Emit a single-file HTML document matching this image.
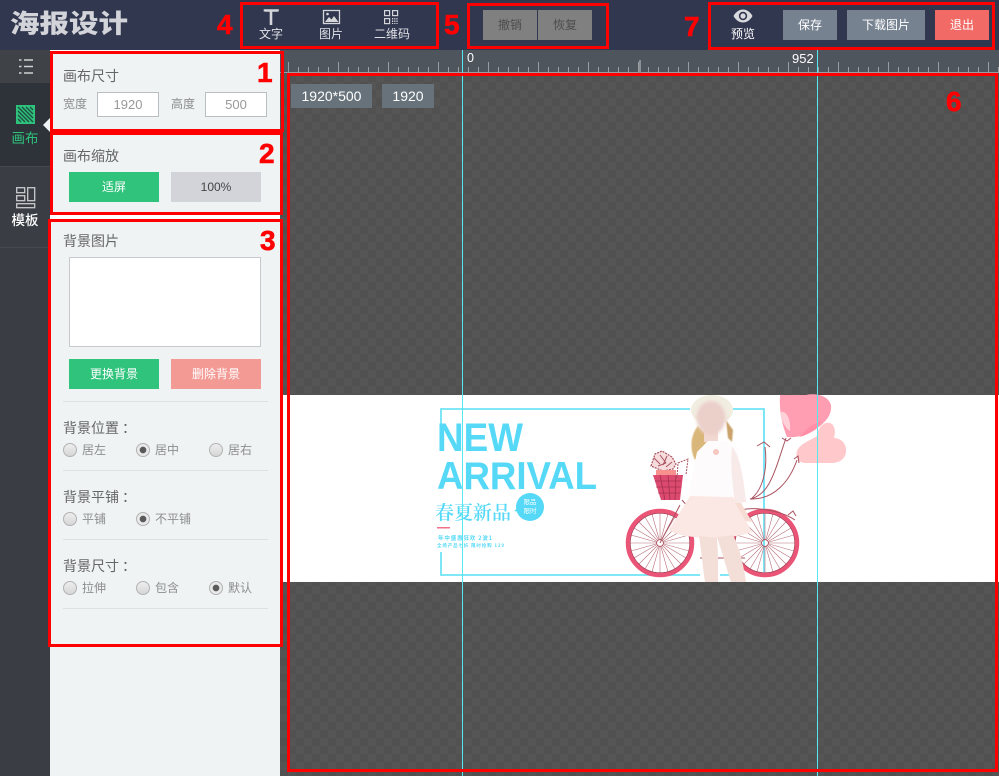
<!DOCTYPE html>
<html lang="zh"><head><meta charset="utf-8"><title>海报设计</title>
<style>
*{box-sizing:border-box}
html,body{margin:0;padding:0;width:999px;height:776px;overflow:hidden;background:#555}
body{position:relative;font-family:"Liberation Sans","Noto Sans CJK SC",sans-serif;font-size:12px;color:#666}
.a{position:absolute}
.t{position:absolute;white-space:nowrap;text-align:center}
.l{position:absolute;white-space:nowrap}
.r{position:absolute;border:3px solid #f00}
.n{position:absolute;color:#f00;font:bold 28px/30px "Liberation Sans",sans-serif;-webkit-text-stroke:.6px #f00}
.b{position:absolute;text-align:center;height:30px;line-height:30px;font-size:12px;color:#fff}
.h{position:absolute;left:63px;width:205px;height:1px;background:#dde1e3}
.ttl{position:absolute;left:63px;font-size:14px;line-height:18px;color:#666;white-space:nowrap}
.ttl span{margin-left:3px}
.rd{position:absolute;width:14px;height:14px;border-radius:50%;border:1px solid #b2b2b2;background:linear-gradient(#eee,#d6d6d6)}
.rd.on{background:radial-gradient(circle,#5a5a5a 0 3px,#e9e9e9 3.6px)}
.rl{position:absolute;font-size:12px;line-height:16px;color:#8d8d8d;white-space:nowrap}
.inp{position:absolute;top:92px;height:25px;background:#fff;border:1px solid #b9bec2;color:#999;text-align:center;line-height:24px;font-size:13px}
</style></head><body>

<div class="a" style="left:0;top:0;width:999px;height:50px;background:#323750"></div>
<div class="l" style="left:10px;top:6px;font-size:29.500px;line-height:38px;font-weight:900;color:#d2d4d9;transform:scaleY(.86);transform-origin:0 50%">海报设计</div>

<!-- toolbar -->
<svg class="a" style="left:255px;top:5px" width="160" height="24" viewBox="0 0 160 24" fill="none">
<path d="M10 6.500V5.500H22.500V6.500M16 5.500V20" stroke="#d4d6da" stroke-width="2.600"/>
<rect x="68.500" y="5.500" width="16" height="13" stroke="#d4d6da" stroke-width="1.300"/>
<path d="M70 17l4-5 2.500 2.500 2.500-3.500 4.500 6z" fill="#d4d6da"/><circle cx="72.500" cy="9" r="1.300" fill="#d4d6da"/>
<g stroke="#d4d6da" stroke-width="1.200"><rect x="129.600" y="5.600" width="5" height="5"/><rect x="137.600" y="5.600" width="5" height="5"/><rect x="129.600" y="13.600" width="5" height="5"/><path d="M137.600 13v6M139.800 13v6M142 13v6" stroke-dasharray="1.500 1"/></g>
</svg>
<div class="t" style="left:251px;width:40px;top:26px;line-height:17px;color:#dfe1e5">文字</div>
<div class="t" style="left:311px;width:40px;top:26px;line-height:17px;color:#dfe1e5">图片</div>
<div class="t" style="left:367px;width:50px;top:26px;line-height:17px;color:#dfe1e5">二维码</div>

<div class="b" style="left:483px;top:10px;width:54px;background:#808080;color:#4d4d4d">撤销</div>
<div class="b" style="left:538px;top:10px;width:54px;background:#808080;color:#4d4d4d">恢复</div>

<svg class="a" style="left:733px;top:9px" width="20" height="14" viewBox="0 0 20 14"><path d="M0.500 7C3 2.500 6.500 0.500 10 0.500S17 2.500 19.500 7C17 11.500 13.500 13.500 10 13.500S3 11.500 0.500 7z" fill="#d8dade"/><circle cx="10" cy="7" r="4.200" fill="#323750"/><circle cx="10" cy="7" r="2.600" fill="#d8dade"/></svg>
<div class="t" style="left:723px;width:40px;top:26px;line-height:17px;color:#fff">预览</div>
<div class="b" style="left:783px;top:10px;width:54px;background:#768290">保存</div>
<div class="b" style="left:847px;top:10px;width:78px;background:#768290">下载图片</div>
<div class="b" style="left:935px;top:10px;width:54px;background:#f26a66">退出</div>

<!-- left rail -->
<div class="a" style="left:0;top:50px;width:50px;height:726px;background:#3a3d44"></div>
<div class="a" style="left:0;top:50px;width:50px;height:33px;background:#3f4246"></div>
<div class="a" style="left:0;top:83px;width:50px;height:83px;background:#2d3339"></div>
<div class="a" style="left:0;top:166px;width:50px;height:1px;background:#45484e"></div>
<div class="a" style="left:0;top:247px;width:50px;height:1px;background:#45484e"></div>
<svg class="a" style="left:0;top:50px" width="50" height="200" viewBox="0 0 50 200" fill="none">
<g stroke="#d0d2d4" stroke-width="1.600"><path d="M19 10h2.500M24 10h9M19 16.500h2.500M24 16.500h9M19 23h2.500M24 23h9"/></g>
<rect x="16" y="55" width="19" height="19" fill="#2ec27c"/>
<path d="M18 57l15 15M18 61l11 11M18 65l7 7M18 69l3 3M22 57l11 11M26 57l7 7M30 57l3 3" stroke="#1f4a3f" stroke-width="1.300"/>
<g stroke="#c9cbce" stroke-width="1.300"><rect x="16.700" y="137.700" width="8" height="5"/><rect x="16.700" y="145.700" width="8" height="5"/><rect x="27.700" y="137.700" width="7" height="13"/><rect x="16.700" y="153.700" width="18" height="4"/></g>
</svg>
<div class="t" style="left:5px;width:40px;top:130px;font-size:13.500px;line-height:18px;color:#2ec27c">画布</div>
<div class="t" style="left:5px;width:40px;top:212px;font-size:13.500px;line-height:18px;color:#fff;font-weight:500">模板</div>

<!-- panel -->
<div class="a" style="left:50px;top:50px;width:230px;height:726px;background:#eff3f4"></div>
<div class="a" style="left:50px;top:50px;width:232px;height:2px;background:#fff"></div>
<div class="a" style="left:50px;top:131px;width:232px;height:3px;background:#fff"></div>
<div class="a" style="left:50px;top:214px;width:232px;height:6px;background:#fff"></div>
<div class="a" style="left:43px;top:118px;width:0;height:0;border:solid transparent;border-width:7px 7px 7px 0;border-right-color:#eff3f4"></div>

<div class="ttl" style="top:67px">画布尺寸</div>
<div class="rl" style="left:63px;top:96px;color:#8d8d8d">宽度</div>
<div class="inp" style="left:97px;width:62px">1920</div>
<div class="rl" style="left:171px;top:96px">高度</div>
<div class="inp" style="left:205px;width:62px">500</div>

<div class="ttl" style="top:147px">画布缩放</div>
<div class="b" style="left:69px;top:172px;width:90px;background:#2fc37c">适屏</div>
<div class="b" style="left:171px;top:172px;width:90px;background:#d3d4da;color:#444">100%</div>

<div class="ttl" style="top:232px">背景图片</div>
<div class="a" style="left:69px;top:257px;width:192px;height:90px;background:#fff;border:1px solid #c6cace"></div>
<div class="b" style="left:69px;top:359px;width:90px;background:#2fc37c">更换背景</div>
<div class="b" style="left:171px;top:359px;width:90px;background:#f39a95">删除背景</div>
<div class="h" style="top:401px"></div>

<div class="ttl" style="top:419px">背景位置<span>：</span></div>
<div class="rd" style="left:63px;top:443px"></div><div class="rl" style="left:82px;top:442px">居左</div>
<div class="rd on" style="left:136px;top:443px"></div><div class="rl" style="left:155px;top:442px">居中</div>
<div class="rd" style="left:209px;top:443px"></div><div class="rl" style="left:228px;top:442px">居右</div>
<div class="h" style="top:470px"></div>

<div class="ttl" style="top:488px">背景平铺<span>：</span></div>
<div class="rd" style="left:63px;top:512px"></div><div class="rl" style="left:82px;top:511px">平铺</div>
<div class="rd on" style="left:136px;top:512px"></div><div class="rl" style="left:155px;top:511px">不平铺</div>
<div class="h" style="top:539px"></div>

<div class="ttl" style="top:557px">背景尺寸<span>：</span></div>
<div class="rd" style="left:63px;top:581px"></div><div class="rl" style="left:82px;top:580px">拉伸</div>
<div class="rd" style="left:136px;top:581px"></div><div class="rl" style="left:155px;top:580px">包含</div>
<div class="rd on" style="left:209px;top:581px"></div><div class="rl" style="left:228px;top:580px">默认</div>
<div class="h" style="top:608px"></div>

<!-- ruler -->
<div class="a" style="left:280px;top:50px;width:719px;height:24px;background-color:#4f555d;background-image:linear-gradient(#9a9ea2,#9a9ea2),linear-gradient(90deg,#9a9ea2 1px,transparent 1px),linear-gradient(90deg,#9a9ea2 1px,transparent 1px);background-size:100% 1px,50px 11px,10px 6px;background-position:0 22px,8px 12px,8px 17px;background-repeat:no-repeat,repeat-x,repeat-x"></div>
<div class="a" style="left:639px;top:60px;width:2px;height:13px;background:#8d9195"></div>
<div class="l" style="left:467px;top:51px;font-size:12.500px;line-height:15px;color:#fff">0</div>
<div class="l" style="left:792px;top:51px;font-size:13px;line-height:15px;color:#fff">952</div>

<!-- canvas -->
<div class="a" style="left:280px;top:74px;width:719px;height:702px;background-color:#555;background-image:conic-gradient(#515151 25%,transparent 0 50%,#515151 0 75%,transparent 0);background-size:16px 16px"></div>
<div class="t" style="left:291px;top:84px;width:81px;height:24px;line-height:24px;background:#67727a;color:#fff;font-size:14px">1920*500</div>
<div class="t" style="left:382px;top:84px;width:52px;height:24px;line-height:24px;background:#67727a;color:#fff;font-size:14px">1920</div>
<div class="a" style="left:280px;top:395px;width:719px;height:187px;background:#fff"></div>

<svg class="a" style="left:0;top:0" width="999" height="776" viewBox="0 0 999 776" fill="none">
<defs>
<filter id="bl" x="-30%" y="-30%" width="160%" height="160%"><feGaussianBlur stdDeviation="1.500"/></filter>
<filter id="bl2" x="-30%" y="-30%" width="160%" height="160%"><feGaussianBlur stdDeviation="0.600"/></filter>
<g id="wh">
<g stroke="#b9707b" stroke-width="0.600"><path d="M-30 0H-4M4 0H30M0-30V-4M0 4V30M-26-15L-4-2M4 2L26 15M-26 15L-4 2M4-2L26-15M-15-26L-2-4M2 4L15 26M-15 26L-2 4M2-4L15-26M-29-8L-4-1M4 1L29 8M-29 8L-4 1M4-1L29-8M-8-29L-1-4M1 4L8 29M-8 29L-1 4M1-4L8-29M-21-21L-3-3M3 3L21 21M-21 21L-3 3M3-3L21-21"/></g>
<circle r="32" stroke="#ea5577" stroke-width="4.500"/><circle r="29.700" stroke="#9c3c50" stroke-width="0.600"/><circle r="3.500" stroke="#a9525f"/>
</g>
</defs>
<!-- frame -->
<path d="M441 432V409H690M733 409H764V572M441 552V575H700M720 575H735" stroke="#6ee4f6" stroke-width="1.800"/>
<!-- titles -->
<text x="437" y="451" font-family="Liberation Sans" font-weight="bold" font-size="40" fill="#55d9f7" textLength="86" lengthAdjust="spacingAndGlyphs">NEW</text>
<text x="437" y="489" font-family="Liberation Sans" font-weight="bold" font-size="39" fill="#55d9f7" textLength="160" lengthAdjust="spacingAndGlyphs">ARRIVAL</text>
<text x="435" y="519" font-family="Noto Serif CJK SC" font-size="19" font-weight="600" fill="#55d9f7">春夏新品</text>
<circle cx="530" cy="507" r="14" fill="#55d9f7"/><path d="M518 508l-4 3 6 1z" fill="#55d9f7"/>
<text x="530" y="504" text-anchor="middle" font-size="6.500" font-family="Noto Sans CJK SC" fill="#fff">限品</text>
<text x="530" y="513" text-anchor="middle" font-size="6.500" font-family="Noto Sans CJK SC" fill="#fff">限时</text>
<rect x="437" y="527" width="13" height="1.500" fill="#f0708a"/>
<text x="438" y="540" font-size="5.500" font-weight="bold" font-family="Noto Sans CJK SC" fill="#55d9f7" textLength="54">年中盛惠狂欢 2波1</text>
<text x="437" y="547" font-size="4.500" font-weight="bold" font-family="Noto Sans CJK SC" fill="#55d9f7" textLength="67">全场产品七折 限时抢购 129</text>
<!-- balloons -->
<path d="M797 451C800 443 812 440 817 436C818 426 826 420 832 424C836 428 835 434 834 438C842 438 847 445 846 452C845 460 838 463 832 463H806C799 463 795 458 797 451z" fill="#ffc9cb"/>
<path d="M787 437C782 425 779 410 780 395H806C815 393 828 395 831 405C832 415 826 422 815 430C807 435 797 438 787 437z" fill="#ff9db3"/>
<path d="M780 412C787 410 791 420 790 431C785 428 781 420 780 412z" fill="#ffd0d8"/>
<path d="M800 437C806 428 815 423 821 421C818 428 810 434 800 437z" fill="#ff8ea6"/>
<g stroke="#a9525f" stroke-width="1"><path d="M750 499C770 495 775 470 786 438M750 499C775 500 790 480 797 460M752 498C762 490 768 470 765 447"/><path d="M757 446L764 442L770 447M782 438l5 3 4-3M794 459l4-3 1 7"/></g>
<!-- bike -->
<use href="#wh" x="660" y="543"/><use href="#wh" x="765" y="543"/>
<path d="M682 500L700 520M680 505L660 543M700 558H745" stroke="#a9525f"/>
<path d="M735 512C750 505 780 510 795 520M788 515l5-4 3 5" stroke="#a9525f" stroke-width="1"/>
<!-- basket -->
<path d="M653 475H683L680 500H661z" fill="#dc4a70"/><path d="M655 481H681M656 487H681M658 493H680M660 475L665 500M668 475L670 500M676 475L675 500" stroke="#a63050" stroke-width="0.800"/>
<path d="M651 466l4-12 7-3 5 3 5 3 4 7-3 5-10 2z" fill="#f6dcdc" stroke="#a9525f" stroke-width="1.200" stroke-dasharray="2 1"/>
<path d="M654 458l6 6M660 455l6 8M667 456l-4 9M658 466l8-3M672 462l-6 5" stroke="#a9525f" stroke-width="1"/>
<path d="M677 478L678 463L688 459L686 475" stroke="#a9525f" stroke-width="1" stroke-dasharray="2 1"/>
<rect x="656" y="470" width="20" height="5" fill="#f8908e"/>
<!-- girl -->
<path d="M695 460C689 448 691 434 698 426L708 436L703 455z" fill="#d9b77a" filter="url(#bl2)"/>
<path d="M728 438L726 420L733 430L732 442z" fill="#caa26a" filter="url(#bl2)"/>
<ellipse cx="712" cy="410" rx="21" ry="15" fill="#f1ede0"/>
<rect x="704" y="430" width="14" height="12" fill="#f1d8d0"/>
<ellipse cx="711" cy="418" rx="14.500" ry="17" fill="#ebcfc9" filter="url(#bl)"/>
<path d="M697 452L708 441H725L737 447L745 502H735L731 496H688z" fill="#fdfbfb"/>
<path d="M732 447C740 455 744 480 746 502L735 504C733 485 730 465 732 447z" fill="#f9eaea"/>
<circle cx="716" cy="452" r="3" fill="#f6c6c0"/>
<path d="M690 496L669 530C678 538 725 542 752 532L733 497z" fill="#fbe7e3"/>
<path d="M735 503L746 521L752 522L741 503z" fill="#f6dcd3"/>
<path d="M699 536C702 555 703 570 705 582H718L718 555L717 538z" fill="#f4ded8"/>
<path d="M717 537C723 555 727 570 731 582H746C743 560 738 545 733 535z" fill="#f4ded8"/>
<!-- guides -->
<path d="M462.500 50V776M817.500 50V776" stroke="#55e8ee"/>
</svg>

<!-- red boxes -->
<div class="r" style="left:50px;top:51px;width:234px;height:81px"></div>
<div class="r" style="left:50px;top:132px;width:233px;height:83px"></div>
<div class="r" style="left:48px;top:219px;width:235px;height:428px"></div>
<div class="r" style="left:240px;top:2px;width:199px;height:47px"></div>
<div class="r" style="left:467px;top:3px;width:142px;height:46px"></div>
<div class="r" style="left:708px;top:2px;width:287px;height:48px"></div>
<div class="r" style="left:287px;top:73px;width:711px;height:699px"></div>
<div class="n" style="left:257px;top:58px">1</div>
<div class="n" style="left:259px;top:139px">2</div>
<div class="n" style="left:260px;top:226px">3</div>
<div class="n" style="left:217px;top:10px">4</div>
<div class="n" style="left:444px;top:10px">5</div>
<div class="n" style="left:946px;top:87px">6</div>
<div class="n" style="left:684px;top:12px">7</div>
</body></html>
